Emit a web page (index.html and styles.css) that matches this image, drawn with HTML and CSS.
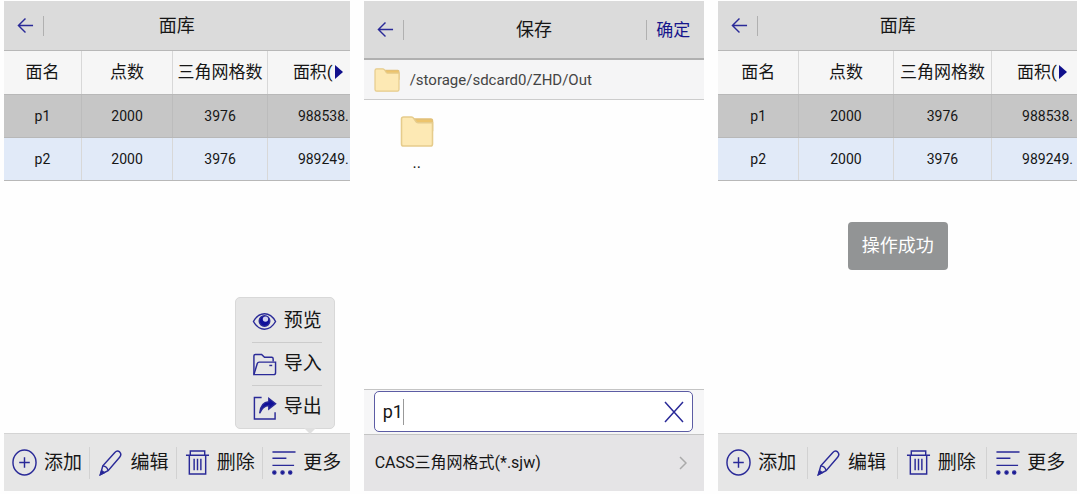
FILE: index.html
```html
<!DOCTYPE html>
<html lang="zh-CN">
<head>
  <meta charset="UTF-8" />
  <meta name="viewport" content="width=device-width, initial-scale=1" />
  <title>面库</title>
  <link rel="stylesheet" href="styles.css">
</head>
<body>

  <!-- Shared icons -->
  <svg class="icon-defs" aria-hidden="true">
    <symbol id="icon-back" viewBox="0 0 18 18">
      <path d="M17 9H2M9 1.500L1.500 9L9 16.500" />
    </symbol>
    <symbol id="icon-add" viewBox="0 0 26 28">
      <ellipse cx="13" cy="14" rx="12" ry="13" />
      <path d="M13 8.500v11M7.500 14h11" />
    </symbol>
    <symbol id="icon-edit" viewBox="0 0 26 28">
      <path d="M2.500 26.500L5 17.500L17.500 3.500Q20 1 22.500 3Q25 5.500 22.500 8.500L10.500 22.500Z" />
      <path d="M5 17.500Q9.500 18 10.500 22.500" />
      <path class="solid" d="M2.500 26.500L3.800 22.500L6.500 24.500Z" />
    </symbol>
    <symbol id="icon-delete" viewBox="0 0 26 28">
      <path d="M1 6.500H25M5.500 6.500V2H20.500V6.500M4.500 6.500V26H21.500V6.500" />
      <path d="M9.500 10V22M13 10V22M16.500 10V22" />
    </symbol>
    <symbol id="icon-more" viewBox="0 0 26 28">
      <path d="M1.500 3H25.500M1.500 9.500H16M1.500 17H24" />
      <g class="solid">
        <circle cx="3.500" cy="24.500" r="1.600" />
        <circle cx="12" cy="24.500" r="1.600" />
        <circle cx="20" cy="24.500" r="1.600" />
      </g>
    </symbol>
    <symbol id="icon-eye" viewBox="0 0 26 26">
      <path d="M1.500 13Q6 5 13 5T24.500 13Q20 21 13 21T1.500 13Z" />
      <circle class="solid" cx="13" cy="12.500" r="5.500" />
      <circle class="glint" cx="14" cy="10.500" r="2.800" />
    </symbol>
    <symbol id="icon-import" viewBox="0 0 26 26">
      <path d="M2 23.500V4Q2 2.500 3.500 2.500H10L13 5.500H20.500Q22 5.500 22 7V10" />
      <path d="M2 23.500L5.500 12Q6 10.500 7.500 10.500H24.500V21.500Q24.500 23.500 22.500 23.500Z" />
      <path d="M18 14H21" />
    </symbol>
    <symbol id="icon-export" viewBox="0 0 26 26">
      <path d="M10 2.500H2.500V25H24V18" />
      <path class="solid" d="M8 19Q9 7.500 17.500 7V3.500L24.500 9L17.500 14.500V11Q11 11.500 8 19Z" />
    </symbol>
    <symbol id="icon-folder" viewBox="0 0 32 30">
      <path class="folder-back" d="M12 3H29.500Q31 3 31 5V14H12Z" />
      <path class="folder-front" d="M1 3Q1 1 3 1H10.500Q12 1 13 2.500L15 5.500Q15.500 6.500 17 6.500H31V27Q31 29 29 29H3Q1 29 1 27Z" />
    </symbol>
  </svg>

  <main class="screens">

    <!-- Screen 1: surface list with the "more" menu open -->
    <section class="screen">
      <header class="title-bar">
        <button class="back" aria-label="返回"><svg class="icon-back"><use href="#icon-back" /></svg></button>
        <h1>面库</h1>
      </header>
      <div class="table-wrap">
        <table class="surface-table">
          <thead>
            <tr><th>面名</th><th>点数</th><th>三角网格数</th><th class="area">面积(<span class="scroll-arrow"></span></th></tr>
          </thead>
          <tbody>
            <tr class="selected"><td>p1</td><td>2000</td><td>3976</td><td class="area">988538.</td></tr>
            <tr><td>p2</td><td>2000</td><td>3976</td><td class="area">989249.</td></tr>
          </tbody>
        </table>
      </div>
      <nav class="toolbar">
        <button><svg class="icon"><use href="#icon-add" /></svg>添加</button>
        <button><svg class="icon"><use href="#icon-edit" /></svg>编辑</button>
        <button><svg class="icon"><use href="#icon-delete" /></svg>删除</button>
        <button><svg class="icon"><use href="#icon-more" /></svg>更多</button>
        <div class="more-menu">
          <button><svg class="icon"><use href="#icon-eye" /></svg>预览</button>
          <button><svg class="icon"><use href="#icon-import" /></svg>导入</button>
          <button><svg class="icon"><use href="#icon-export" /></svg>导出</button>
        </div>
      </nav>
    </section>

    <!-- Screen 2: save dialog -->
    <section class="screen">
      <header class="title-bar save-bar">
        <button class="back" aria-label="返回"><svg class="icon-back"><use href="#icon-back" /></svg></button>
        <h1>保存</h1>
        <button class="confirm">确定</button>
      </header>
      <div class="path-bar">
        <svg class="folder-small"><use href="#icon-folder" /></svg>
        <span>/storage/sdcard0/ZHD/Out</span>
      </div>
      <div class="file-list">
        <button class="folder">
          <svg class="folder-large"><use href="#icon-folder" /></svg>
          <span>..</span>
        </button>
      </div>
      <div class="name-row">
        <div class="name-box">
          <input class="name-input" type="text" value="p1" aria-label="文件名">
          <span class="caret"></span>
          <button class="clear" aria-label="清除">
            <svg viewBox="0 0 20 22"><path d="M1 1L19 21M19 1L1 21" /></svg>
          </button>
        </div>
      </div>
      <button class="format-row">
        <span>CASS三角网格式(*.sjw)</span>
        <svg class="chevron" viewBox="0 0 8 14"><path d="M1 1L7 7L1 13" /></svg>
      </button>
    </section>

    <!-- Screen 3: surface list after a successful export -->
    <section class="screen">
      <header class="title-bar">
        <button class="back" aria-label="返回"><svg class="icon-back"><use href="#icon-back" /></svg></button>
        <h1>面库</h1>
      </header>
      <div class="table-wrap">
        <table class="surface-table">
          <thead>
            <tr><th>面名</th><th>点数</th><th>三角网格数</th><th class="area">面积(<span class="scroll-arrow"></span></th></tr>
          </thead>
          <tbody>
            <tr class="selected"><td>p1</td><td>2000</td><td>3976</td><td class="area">988538.</td></tr>
            <tr><td>p2</td><td>2000</td><td>3976</td><td class="area">989249.</td></tr>
          </tbody>
        </table>
      </div>
      <nav class="toolbar">
        <button><svg class="icon"><use href="#icon-add" /></svg>添加</button>
        <button><svg class="icon"><use href="#icon-edit" /></svg>编辑</button>
        <button><svg class="icon"><use href="#icon-delete" /></svg>删除</button>
        <button><svg class="icon"><use href="#icon-more" /></svg>更多</button>
      </nav>
      <div class="toast" role="status">操作成功</div>
    </section>

  </main>
</body>
</html>
```
FILE: styles.css
```css
* {
  box-sizing: border-box;
  margin: 0;
  padding: 0;
}
body {
  background-color: #fefefe;
  color: #161616;
  font-family: Roboto, "Noto Sans CJK SC", sans-serif;
  font-size: 16px;
  line-height: 24px;
}
button, input {
  border: none;
  background: none;
  color: inherit;
  font: inherit;
}
button {
  cursor: pointer;
}
.icon-defs {
  position: absolute;
  width: 0;
  height: 0;
}
svg {
  display: block;
  flex-shrink: 0;
  fill: none;
  stroke: #2a2a98;
  stroke-width: 1.5;
}
.solid {
  fill: #10109a;
}
.glint {
  fill: #d0d0ee;
  stroke: none;
}
.screens {
  display: grid;
  grid-template-columns: 345fr 340fr 358fr;
  gap: 14px;
  min-height: 100vh;
  padding: 1px 3px 3px 4px;
}
.screen {
  position: relative;
  display: flex;
  flex-direction: column;
  min-width: 0;
}

/* --- Title bar --- */
.title-bar {
  display: grid;
  grid-template-columns: 1fr auto 1fr;
  align-items: center;
  height: 50px;
  background-color: #dbdbdb;
  border-bottom: 1px solid #b8b8b8;
}
.title-bar h1 {
  font-size: 18px;
  font-weight: 400;
}
.back {
  display: flex;
  align-items: center;
  justify-self: start;
  width: 40px;
  height: 20px;
  padding-left: 13px;
  border-right: 1px solid #b0b0b0;
}
.icon-back {
  width: 17px;
  height: 17px;
}
.save-bar {
  height: 59px;
  border-bottom: 2px solid #b0b0b0;
}
.confirm {
  justify-self: end;
  height: 20px;
  padding: 0 14px 0 9px;
  border-left: 1px solid #b0b0b0;
  color: #16168c;
  font-size: 17px;
  line-height: 20px;
}

/* --- Surface table --- */
.table-wrap {
  flex: 1;
  overflow: hidden;
}
.surface-table {
  width: 100%;
  table-layout: fixed;
  border-collapse: collapse;
}
.surface-table th, .surface-table td {
  height: 43px;
  border-right: 1px solid #d8d8d8;
  border-bottom: 1px solid #b8b8b8;
  font-size: 14px;
  text-align: center;
  white-space: nowrap;
}
.surface-table th {
  background-color: #f6f6f6;
  font-size: 17px;
  font-weight: 400;
}
.surface-table th:nth-child(1) { width: 22.4%; }
.surface-table th:nth-child(2) { width: 26.4%; }
.surface-table th:nth-child(3) { width: 27.4%; }
.surface-table td {
  background-color: #e1eaf8;
}
.surface-table .selected td {
  background-color: #c6c6c6;
  border-right-color: #bcbcbc;
}
.surface-table .area {
  padding-left: 25px;
  border-right: none;
  text-align: left;
}
.surface-table td.area {
  padding-left: 30px;
}
.scroll-arrow {
  display: inline-block;
  margin-left: 2px;
  border-top: 7px solid transparent;
  border-bottom: 7px solid transparent;
  border-left: 8px solid #10108c;
  vertical-align: -1px;
}

/* --- Bottom toolbar --- */
.toolbar {
  position: relative;
  display: grid;
  grid-template-columns: repeat(4, 1fr);
  align-items: center;
  height: 58px;
  background-color: #e6e6e6;
  border-top: 1px solid #d4d4d4;
}
.toolbar button {
  display: flex;
  align-items: center;
  gap: 7px;
  font-size: 19px;
  white-space: nowrap;
}
.toolbar > button {
  height: 32px;
  padding-left: 8px;
  border-right: 1px solid #d2d2d2;
}
.toolbar > button:nth-of-type(4) {
  border-right: none;
}
.icon {
  width: 25px;
  height: 27px;
}
.more-menu {
  position: absolute;
  right: 15px;
  bottom: 62px;
  padding: 2px 12px 0 16px;
  background-color: #e6e6e6;
  border: 1px solid #d8d8d8;
  border-radius: 5px;
}
.more-menu::after {
  content: "";
  position: absolute;
  right: 18px;
  top: 100%;
  border: 6px solid transparent;
  border-top-color: #e0e0e0;
  border-bottom: none;
}
.more-menu button {
  height: 42px;
}
.more-menu button + button {
  height: 43px;
  border-top: 1px solid #cccccc;
}
.more-menu .icon {
  height: 25px;
}

/* --- Save dialog --- */
.path-bar {
  display: flex;
  align-items: center;
  gap: 10px;
  height: 40px;
  padding-left: 10px;
  background-color: #f5f5f6;
  border-bottom: 1px solid #cccccc;
  color: #444444;
  font-size: 15px;
}
.folder-small {
  width: 26px;
  height: 24px;
}
.folder-large {
  width: 34px;
  height: 31px;
}
.folder-back {
  fill: #edc46c;
  stroke: #e2c078;
}
.folder-front {
  fill: #fde9b4;
  stroke: #e6cc8c;
}
.file-list {
  flex: 1;
  padding: 16px 36px;
}
.folder {
  display: flex;
  flex-direction: column;
  align-items: center;
  gap: 4px;
}
.name-row {
  padding: 1px 11px 2px 10px;
  background-color: #f6f6f7;
  border-top: 1px solid #c4c4c4;
  border-bottom: 1px solid #c4c4c4;
}
.name-box {
  display: flex;
  align-items: center;
  height: 41px;
  padding: 0 8px;
  background-color: #ffffff;
  border: 1px solid #5c5ca4;
  border-radius: 5px;
}
.name-input {
  width: 20px;
  font-size: 18px;
  outline: none;
}
.caret {
  width: 1px;
  height: 26px;
  background-color: #999999;
}
.clear {
  margin-left: auto;
}
.clear svg {
  width: 20px;
  height: 22px;
}
.format-row {
  display: flex;
  align-items: center;
  justify-content: space-between;
  height: 56px;
  padding: 0 17px 0 11px;
  background-color: #e5e4e6;
  font-size: 16px;
}
.chevron {
  width: 8px;
  height: 14px;
  stroke: #aaaaaa;
}

/* --- Toast --- */
.toast {
  position: absolute;
  top: 221px;
  left: 50%;
  transform: translateX(-50%);
  padding: 12px 14px;
  background-color: #929495;
  border-radius: 4px;
  color: #ffffff;
  font-size: 18px;
  white-space: nowrap;
}
```
